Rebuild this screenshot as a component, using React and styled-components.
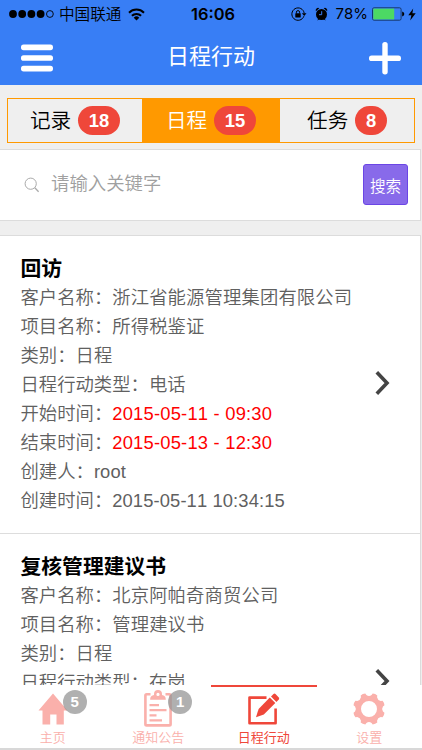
import React from 'react';
import styled, { createGlobalStyle } from 'styled-components';

const colors = {
  BLUE: '#387ef5',
  ORANGE: '#ff9900',
  RED: '#ef473a',
  PURPLE: '#886aea',
  LINE: '#dcdcdc',
  PAGE: '#efefef',
  TEXT: '#606060',
};

const sections = [
  { label: '记录', count: 18 },
  { label: '日程', count: 15, active: true },
  { label: '任务', count: 8 },
];

const schedules = [
  {
    title: '回访',
    rows: [
      { label: '客户名称', value: '浙江省能源管理集团有限公司' },
      { label: '项目名称', value: '所得税鉴证' },
      { label: '类别', value: '日程' },
      { label: '日程行动类型', value: '电话' },
      { label: '开始时间', value: '2015-05-11 - 09:30', alert: true },
      { label: '结束时间', value: '2015-05-13 - 12:30', alert: true },
      { label: '创建人', value: 'root' },
      { label: '创建时间', value: '2015-05-11 10:34:15' },
    ],
  },
  {
    title: '复核管理建议书',
    rows: [
      { label: '客户名称', value: '北京阿帕奇商贸公司' },
      { label: '项目名称', value: '管理建议书' },
      { label: '类别', value: '日程' },
      { label: '日程行动类型', value: '在岗' },
    ],
  },
];

const polar = (radius, degrees) => {
  const angle = (degrees * Math.PI) / 180;
  return `${(16 + radius * Math.cos(angle)).toFixed(2)} ${(16 + radius * Math.sin(angle)).toFixed(2)}`;
};

const gearPath = Array.from({ length: 8 }, (_, i) => {
  const a = 22.5 + i * 45;
  return `${i ? 'L' : 'M'}${polar(15.9, a - 9)}Q${polar(16.6, a)} ${polar(15.9, a + 9)}L${polar(14.2, a + 12)}Q${polar(12.2, a + 22.5)} ${polar(14.2, a + 33)}`;
}).join('');

const HomeIcon = () => (
  <svg width="32" height="34" viewBox="0 0 32 34" fill="currentColor">
    <path d="M16 1.5L30.5 18.4H26.8V32.6H19.5V22.5H13.2V32.6H5.5V18.4H1.5Z" />
  </svg>
);

const ClipboardIcon = () => (
  <svg width="32" height="38" viewBox="0 0 32 38" fill="none" stroke="currentColor">
    <path d="M8.5 4.2H4.6Q3.4 4.2 3.4 5.4V34.2Q3.4 35.4 4.6 35.4H27.4Q28.6 35.4 28.6 34.2V5.4Q28.6 4.2 27.4 4.2H23.5" strokeWidth="2.6" />
    <path d="M7.5 15.2H17M7.5 20.2H24.5M7.5 25.4H14.5M7.5 30.4H20" strokeWidth="2.2" />
    <path
      d="M8.2 9.8C8.2 6.2 10 5.4 12 5V4A4 4 0 0 1 20 4V5C22 5.4 23.8 6.2 23.8 9.8ZM16 2.8A1.6 1.6 0 1 0 16 6A1.6 1.6 0 1 0 16 2.8Z"
      fill="currentColor"
      fillRule="evenodd"
      stroke="none"
    />
  </svg>
);

const ComposeIcon = () => (
  <svg width="36" height="34" viewBox="0 0 36 34" fill="currentColor">
    <path d="M20.5 5.6H3.5V31.2H29.6V16.5" fill="none" stroke="currentColor" strokeWidth="2.6" strokeLinejoin="round" />
    <path d="M10 25.2L12.6 17L23.8 5.6L29.3 11L17.8 22.6Z" />
    <path d="M25 4.4L27.5 2Q28.5 1.2 29.5 2L32.8 5.4Q33.6 6.4 32.8 7.4L30.4 9.9Z" />
  </svg>
);

const GearIcon = () => (
  <svg width="32" height="32" viewBox="0 0 32 32" fill="currentColor">
    <path d={`${gearPath}ZM24 16A8 8 0 1 0 8 16A8 8 0 1 0 24 16Z`} fillRule="evenodd" />
  </svg>
);

const footerTabs = [
  { label: '主页', icon: <HomeIcon />, count: 5 },
  { label: '通知公告', icon: <ClipboardIcon />, count: 1 },
  { label: '日程行动', icon: <ComposeIcon />, active: true },
  { label: '设置', icon: <GearIcon /> },
];

const StatusBar = () => (
  <Status>
    <StatusSide>
      <svg width="46" height="10" viewBox="0 0 46 10">
        {[4, 13.2, 22.4, 31.6].map((x) => (
          <circle key={x} cx={x} cy="5" r="3.9" />
        ))}
        <circle cx="40.9" cy="5" r="3.4" fill="none" stroke="#000" strokeWidth="0.9" />
      </svg>
      <Carrier>中国联通</Carrier>
      <svg width="17" height="13" viewBox="0 0 17 13" fill="none" stroke="#000" strokeWidth="2">
        <path d="M1 4.7A10.6 10.6 0 0 1 16 4.7" />
        <path d="M3.9 7.8A6.5 6.5 0 0 1 13.1 7.8" />
        <path d="M8.5 12.6L5.7 9.7A4 4 0 0 1 11.3 9.7Z" fill="#000" stroke="none" />
      </svg>
    </StatusSide>
    <Clock>16:06</Clock>
    <StatusSide $end>
      <svg width="16" height="14" viewBox="0 0 16 14">
        <path d="M12.9 9.2A6.2 6.2 0 1 1 13.2 6.2" fill="none" stroke="#000" strokeWidth="1" />
        <path d="M10.9 6.2H15.5L13.2 9.1Z" />
        <rect x="4.3" y="6.2" width="5.4" height="4.2" rx="0.5" />
        <path d="M5.4 6.5V5.2A1.6 1.6 0 0 1 8.6 5.2V6.5" fill="none" stroke="#000" />
      </svg>
      <Alarm width="13" height="14" viewBox="0 0 13 14">
        <circle cx="6.5" cy="7.5" r="5.5" />
        <path d="M0.9 4.2A2.4 2.4 0 0 1 4.3 1.2ZM12.1 4.2A2.4 2.4 0 0 0 8.7 1.2ZM2.2 13.4L3.8 11L5 12ZM10.8 13.4L9.2 11L8 12Z" />
        <path d="M6.7 4.2V7.7H4" fill="none" stroke={colors.BLUE} strokeWidth="1" />
      </Alarm>
      <Percent>78%</Percent>
      <svg width="33" height="14" viewBox="0 0 33 14">
        <rect x="0.5" y="0.8" width="28.6" height="12.4" rx="1.6" fill="none" stroke="#12305f" strokeWidth="0.9" />
        <rect x="1.3" y="1.6" width="20.9" height="10.8" fill="#4cd964" />
        <path d="M30.2 4.6Q32.3 5.2 32.3 7Q32.3 8.8 30.2 9.4Z" />
      </svg>
      <Bolt width="8" height="13" viewBox="0 0 8 13">
        <path d="M5.2 0.5L0.3 7.2H3.4L2.2 12.4L7.7 5.3H4.4Z" />
      </Bolt>
    </StatusSide>
  </Status>
);

const ScheduleItem = ({ title, rows }) => (
  <Item>
    <div>
      <ItemTitle>{title}</ItemTitle>
      {rows.map(({ label, value, alert }) => (
        <Row key={label}>
          {label}：<Value $alert={alert}>{value}</Value>
        </Row>
      ))}
    </div>
    <Chevron width="16" height="26" viewBox="0 0 16 26">
      <path d="M2.8 2.3L13 13L2.8 23.7" fill="none" stroke="#444" strokeWidth="3.6" />
    </Chevron>
  </Item>
);

export default function App() {
  return (
    <>
      <GlobalStyle />
      <Screen>
        <Header>
          <StatusBar />
          <NavBar>
            <svg width="32" height="28" viewBox="0 0 32 28" fill="#fff">
              <rect width="32" height="5.6" y="0.6" rx="2.6" />
              <rect width="32" height="5.6" y="11.2" rx="2.6" />
              <rect width="32" height="5.6" y="21.8" rx="2.6" />
            </svg>
            <NavTitle>日程行动</NavTitle>
            <svg width="32" height="34" viewBox="0 0 32 34" fill="#fff">
              <rect x="0" y="14.6" width="32" height="5.4" rx="2.6" />
              <rect x="13.3" y="1" width="5.4" height="32.4" rx="2.6" />
            </svg>
          </NavBar>
        </Header>
        <Content>
          <Sections>
            {sections.map(({ label, count, active }) => (
              <Section key={label} $active={active}>
                {label}
                <Count>{count}</Count>
              </Section>
            ))}
          </Sections>
          <SearchPanel>
            <svg width="16" height="16" viewBox="0 0 16 16" fill="none" stroke="#aaa">
              <circle cx="6.7" cy="6.7" r="5.6" />
              <path d="M10.8 10.8L14.6 14.8" strokeWidth="1.3" />
            </svg>
            <SearchHint>请输入关键字</SearchHint>
            <SearchButton>搜索</SearchButton>
          </SearchPanel>
          <List>
            {schedules.map((schedule) => (
              <ScheduleItem key={schedule.title} {...schedule} />
            ))}
          </List>
        </Content>
        <Footer>
          {footerTabs.map(({ label, icon, count, active }) => (
            <FooterTab key={label} $active={active}>
              <IconBox $active={active}>
                {icon}
                {count && <Badge>{count}</Badge>}
              </IconBox>
              <FooterLabel $active={active}>{label}</FooterLabel>
            </FooterTab>
          ))}
        </Footer>
      </Screen>
    </>
  );
}

const GlobalStyle = createGlobalStyle`
  body {
    margin: 0;
    overflow: hidden;
  }

  * {
    box-sizing: border-box;
  }

  svg {
    display: block;
    flex: none;
  }
`;

const Screen = styled.div`
  background: ${colors.PAGE};
  display: flex;
  flex-direction: column;
  font-family: 'Liberation Sans', 'Noto Sans CJK SC', sans-serif;
  font-kerning: none;
  font-weight: 350;
  height: 750px;
  overflow: hidden;
  width: 422px;
`;

const Header = styled.header`
  background: ${colors.BLUE};
  flex: none;
  height: 85px;
`;

const Status = styled.div`
  align-items: center;
  display: grid;
  grid-template-columns: 1fr auto 1fr;
  height: 28px;
  padding: 0 6px 0 9px;
`;

const StatusSide = styled.div`
  align-items: center;
  display: flex;
  justify-content: ${({ $end }) => ($end ? 'flex-end' : 'flex-start')};
`;

const Carrier = styled.span`
  font-size: 15.6px;
  line-height: 20px;
  margin: 1px 7px 0 4px;
`;

const Clock = styled.span`
  font-family: Inter, sans-serif;
  font-size: 16.4px;
  font-weight: 600;
  line-height: 20px;
  margin-left: 1px;
`;

const Alarm = styled.svg`
  margin: 0 8px;
`;

const Percent = styled.span`
  font-family: Inter, sans-serif;
  font-size: 15px;
  font-weight: 400;
  line-height: 20px;
  margin-right: 4px;
`;

const Bolt = styled.svg`
  margin-left: 3px;
`;

const NavBar = styled.div`
  align-items: center;
  color: #fff;
  display: flex;
  height: 57px;
  justify-content: space-between;
  padding: 3px 21px 0;
`;

const NavTitle = styled.h1`
  font-size: 22px;
  font-weight: 400;
  line-height: 30px;
  margin: 0 0 2px;
`;

const Content = styled.main`
  flex: 1;
  min-height: 0;
  overflow: hidden;
  padding-top: 13px;
`;

const Sections = styled.div`
  border: 1px solid ${colors.ORANGE};
  display: grid;
  grid-template-columns: 134px 138px 134px;
  height: 45px;
  margin: 0 7px 6px;
`;

const Section = styled.div`
  align-items: center;
  background: ${({ $active }) => ($active ? colors.ORANGE : 'transparent')};
  color: ${({ $active }) => ($active ? '#fff' : '#000')};
  display: flex;
  font-size: 20.6px;
  gap: 7px;
  justify-content: center;
  line-height: 28px;
`;

const Count = styled.span`
  background: ${colors.RED};
  border-radius: 14.5px;
  color: #fff;
  font-size: 18.4px;
  font-weight: 700;
  line-height: 29px;
  padding: 0 10.7px;
`;

const SearchPanel = styled.div`
  align-items: center;
  background: #fff;
  border: 1px solid ${colors.LINE};
  border-left: none;
  display: flex;
  height: 72px;
  margin: 0 1px 14px 0;
  padding: 0 12px 0 24px;
`;

const SearchHint = styled.span`
  color: #a0a0a0;
  flex: 1;
  font-size: 18.4px;
  line-height: 26px;
  margin: 0 0 2px 11px;
`;

const SearchButton = styled.button`
  background: ${colors.PURPLE};
  border: 1px solid #6b46e5;
  border-radius: 3px;
  color: #fff;
  font-family: inherit;
  font-size: 15.6px;
  font-weight: 350;
  height: 41px;
  margin-bottom: 1px;
  padding: 0;
  width: 45px;
`;

const List = styled.div`
  background: #fff;
  border-right: 1px solid ${colors.LINE};
  border-top: 1px solid ${colors.LINE};
  margin-right: 1px;
`;

const Item = styled.article`
  align-items: center;
  border-bottom: 1px solid #ddd;
  display: flex;
  height: 298px;
  justify-content: space-between;
  padding: 18px 30px 18px 20.5px;

  > div {
    align-self: flex-start;
  }
`;

const ItemTitle = styled.h2`
  color: #000;
  font-size: 20.8px;
  font-weight: 700;
  line-height: 29px;
  margin: 0;
`;

const Row = styled.p`
  color: ${colors.TEXT};
  font-size: 18.35px;
  height: 29px;
  line-height: 29px;
  margin: 0;
  white-space: nowrap;
`;

const Value = styled.span`
  color: ${({ $alert }) => ($alert ? '#f00' : 'inherit')};
  letter-spacing: ${({ $alert }) => ($alert ? '0.22px' : '0.12px')};
`;

const Chevron = styled.svg`
  margin-bottom: 3px;
`;

const Footer = styled.footer`
  background: #fff;
  border-bottom: 2px solid #d8d8d8;
  display: grid;
  flex: none;
  grid-template-columns: repeat(4, 1fr);
  height: 65px;
`;

const FooterTab = styled.div`
  align-items: center;
  border-top: 2px solid ${({ $active }) => ($active ? colors.RED : 'transparent')};
  color: ${colors.RED};
  display: flex;
  flex-direction: column;
  padding-top: 3px;
`;

const IconBox = styled.div`
  align-items: center;
  color: ${({ $active }) => ($active ? colors.RED : '#fab0ab')};
  display: flex;
  height: 38px;
  position: relative;
`;

const Badge = styled.span`
  background: rgba(150, 150, 150, 0.75);
  border-radius: 50%;
  color: #fff;
  font-size: 15px;
  font-weight: 700;
  height: 24px;
  left: 26px;
  line-height: 24px;
  position: absolute;
  text-align: center;
  top: 0;
  width: 24px;
`;

const FooterLabel = styled.span`
  color: ${({ $active }) => ($active ? colors.RED : '#fab0ab')};
  font-size: 13px;
  font-weight: ${({ $active }) => ($active ? 400 : 350)};
  line-height: 20px;
`;
